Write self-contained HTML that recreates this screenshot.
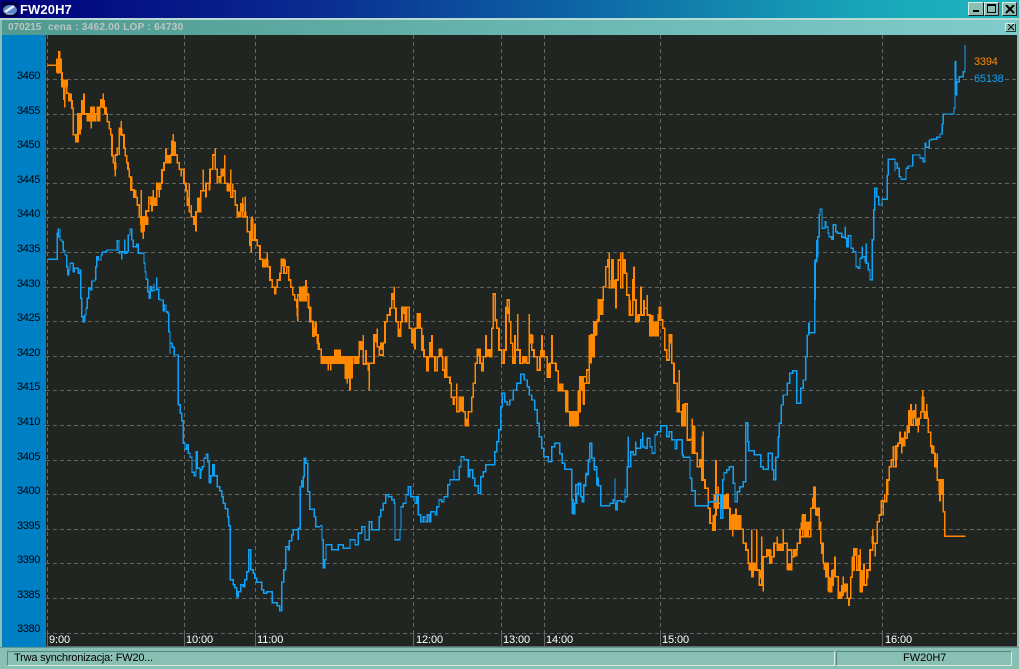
<!DOCTYPE html>
<html><head><meta charset="utf-8"><style>
html,body{margin:0;padding:0;background:#8abfb4}
#w{position:relative;width:1019px;height:669px;overflow:hidden;background:#8abfb4;font-family:"Liberation Sans",sans-serif}
#w div,#w span{position:absolute;white-space:nowrap}
.y{left:17px;font-size:11px;line-height:12px;color:#000;letter-spacing:-.35px}
.t{top:634px;font-size:11px;line-height:12px;color:#fff;letter-spacing:-.1px}
.b{background:#8cbfb4;border:1px solid;border-color:#d8ece6 #202020 #202020 #d8ece6;box-sizing:border-box}
</style></head><body><div id="w">
<div style="left:0;top:0;width:1019px;height:18px;background:linear-gradient(90deg,#00007c 0%,#0a2a90 30%,#0c62a4 55%,#18a6b8 85%,#20b4c0 100%)"></div>
<div style="left:0;top:18px;width:1019px;height:2px;background:#b8dcd4"></div>
<div style="left:2px;top:20px;width:1015px;height:15px;background:linear-gradient(90deg,#4f9b90,#80cccc)"></div>
<svg style="position:absolute;left:2px;top:2px" width="16" height="15" viewBox="0 0 16 15"><rect width="16" height="15" fill="#00003c"/><ellipse cx="8" cy="8" rx="7" ry="5" fill="#5c88c8"/><path d="M3 10L12 4" stroke="#e8f0ff" stroke-width="2.5"/><path d="M4 12H12" stroke="#a8b8d0"/></svg>
<div style="left:20px;top:2px;font-size:13px;line-height:15px;font-weight:bold;color:#fff;letter-spacing:.1px">FW20H7</div>
<div class="b" style="left:968px;top:2px;width:16px;height:14px"></div>
<div style="left:973px;top:10px;width:6px;height:2px;background:#000"></div>
<div class="b" style="left:984px;top:2px;width:15px;height:14px"></div>
<div style="left:987px;top:4px;width:9px;height:9px;border:1px solid #000;border-top-width:2px;box-sizing:border-box"></div>
<div class="b" style="left:1002px;top:2px;width:15px;height:14px"></div>
<svg style="position:absolute;left:1005px;top:5px" width="10" height="9"><path d="M1 0L9 8M9 0L1 8" stroke="#000" stroke-width="2"/></svg>
<div class="b" style="left:1005px;top:23px;width:11px;height:9px;border-color:#d8ece6 #204040 #204040 #d8ece6"></div>
<svg style="position:absolute;left:1007px;top:24px" width="8" height="7"><path d="M1 0L7 6M7 0L1 6" stroke="#000" stroke-width="1"/></svg>
<div style="left:8px;top:22px;font-size:10px;line-height:12px;font-weight:bold;color:#c0c4c0;letter-spacing:0">070215</div>
<div style="left:48px;top:22px;font-size:10px;line-height:12px;font-weight:bold;color:#c0c4c0;letter-spacing:.3px">cena : 3462.00 LOP : 64730</div>
<div style="left:2px;top:35px;width:44px;height:612px;background:#0080c4"></div>
<div style="left:46px;top:35px;width:971px;height:612px;background:#202522"></div>
<svg style="position:absolute;left:0;top:0" width="1019" height="669" shape-rendering="crispEdges">
<g fill="none" stroke="#636663" stroke-width="1" stroke-dasharray="4 3">
<path d="M46 79.5H1017M46 114.5H1017M46 148.5H1017M46 183.5H1017M46 217.5H1017M46 252.5H1017M46 287.5H1017M46 321.5H1017M46 356.5H1017M46 390.5H1017M46 425.5H1017M46 460.5H1017M46 494.5H1017M46 529.5H1017M46 563.5H1017M46 598.5H1017M46 633.5H1017"/>
<path d="M47.5 35V633M184.5 35V633M255.5 35V633M413.5 35V633M501.5 35V633M544.5 35V633M660.5 35V633M882.5 35V633"/>
</g>
<path d="M47.5 633V646M184.5 633V646M255.5 633V646M413.5 633V646M501.5 633V646M544.5 633V646M660.5 633V646M882.5 633V646M46 646.5H1017" stroke="#666" fill="none"/>
<!-- orange -->
<g fill="none" stroke="#ff8800" stroke-width="5">
<path transform="translate(40 40) scale(.3333)" d="M22 76H52V55V98H58V33V98H66V118V140H72V180V140H74V203V140H80V118V160H86V182H96V205H100V284H108V305H114V268V222H120V284V222H126V180V205H132V160V222H142V245V222H154V266V202H162V245V222H172V245V202H182V180H190V160V203H198V222H202V245H208V266H212V284H216V325V347H220V368H226V410V345H232V325H238V345V265H244V243V285H252V325H256V347H260V368H264V388H268V410H272V450H282V472H292V495H298V530H304V450V575H310V597V530H318V555V513H326V472H336V515V495H340V450V495H350V472V430H358V472V430H366V390H372V368H378V325V368H392V345H396V304H400V282V345H406V304V345H412V368H418V388H424V410V388H432V430H438V452H442V495H448V430V515H454V495V530H462V552H468V575V515H474V472V515H482V452H490V388V452H498V472V430H510V388H518V345H526V325V388H532V430V410H544V388H554V345V430H562V452H572V388V472H578V430V452H586V495H592V530H602V492H608V472V530H616V470V530H622V575H630V600H636V530V600H645V550V600"/>
<path transform="translate(40 220) scale(.3333)" d="M622 0V35H630V75H634V97V0H638V60H645V10V60H652V77H660V118H668V140H676V118H682V97V140H690V180H697V202H705V224V202H712V180H720V160H724V118H732V160H740V140H746V180H752V202H758V224H764V240H770V262H773V305V224H780V202V242H790V222V242H798V180V222H805V262H812V304H820V345H826V304V345H835V388H840"/>
<path transform="translate(300 240) scale(.3333)" d="M0 140V182H6V140V182H12V140H18V120V165H26V205H30V245H38V288H42V265H48V245V285H52V310H58V328H64V372V350H85V392V350H92V392V350H104V328V350H112V328V350H120V328V350H136V415H142V430V350H150V452V350H156V415V350H178V306H190V285V372H198V330V370H205V390H208V452V370H215V370H222V285H232V265V320H238V345H250V308H255V245H262V225H270V205H275V162H283V140V205H288V245H295V288H302V245H306V202H316V245H320V202H328V265H335V308H345V328V265H352V222H360V265H365V330H372V350H380V392H385V350H390V308H396V285V350H405V392H412V350H418V328H425V350H428V390H435V412H443V412H450V430H454V472H460V495V472H470V430V515H478V472H490V515H496V557H505V515H510H515V472H520V430H526V392V370H532V328H540V370H545V392H550V350H558V285V330H570V350H575V265H580V162H586V240H590V265H597V330H600H605V370H612V330H618V202H622V180H628V245H632V310H638V370H645V285V330H653V222V330H660V370H668V350H680V370H688V222V285H695V330H702V350H712V390H720V350H726V285V350H735V350H742V412H750V370H756V285V370H768V392H775V452H790V452H798V515H806V515H812V555H820V515H828V555H835V515H840V410H850V492V410H860V430H868V285V350H878V285H885V245H892V240H898V180"/>
<path transform="translate(570 240) scale(.3333)" d="M0 515V557H5V515H12V535V557H20V515H25V450V510H30V410H36V450H42V495V430H50V390H58V350H63V370V285H68V350H72V245H80V287V245H85V225V180H100V140H107V80H113V60H118V37V143H125V60H130V143H138V205V120H145V60H152V37V143H158V37V100H168V100H170V165H178V225H180V180V225H188V120H192V80V180H198V245H205V225H213V140V225H222V180V205H232V165V225H240V287H248V225V287H256V245V287H265V225H270V200V240H278V265H284V330H290V360H298V285H305V370H312V430H318H322V515H328V390V515H336V557H345V492H352V600H360V598H367V535V640H372V557V640H382V680H390V660H395V720H400V575V720H405V745H415V805H420V850H428V870H435V825H438V660V805H445V740V790H455V763V805H470V763H475V805H480V868H488V890V825H498V805V868H510V825V868H520V910H528V930H535V970H545V868V1010H550V970H555V990H560V868V990H568V1035H575V890V1015H580V1055V950H590V930H600V970H605V950H612V910H622V890V930H640V868V910H652V990V930H665V992V950H672V930H682V910H690V868H698V825V890H708V868V890H715V848V890H722V805H732V740V805H740V825H748V868H752V910H760V970H770V990H775V1055"/>
<path transform="translate(800 370) scale(.3333)" d="M0 478V500H8V435H15V500V457H20V500H25V457H32V415H38V385H42V352H45V415H50V435H55V415H58V457H62V520H66V550H70V580H85V622H88V665H95V600V645H100V600H105V560V620H115V645V685H125V645V675H130V620V665H135V643H142V685H147V708V685H152V622H157V560V600H162V537H170V600H176V558H181V537V665H186V600V645H192V580V645H200V600H210V540H218V478V520H226V560V520H232V455H238V435H244V393H250V437V393H254V372V395H260V330H268V290H274V270H280V228V290H288V228H294V220H300V185V205H305V250V205H315V185V205H322V165V187H327V123H333V102V165H340V123H347V102V165H355V187V145H362V125H368V60V125H375V145H380V102V145H385V187H392V228H398V250H405V290H412V250V330H420V395V330H430V425H434V499H497"/>
</g>
<g fill="#ff8800">
<path transform="translate(40 40) scale(.3333)" d="M48 55H66V98H48ZM54 33H62V55H54ZM66 118H84V140H66ZM84 160H96V182H84ZM114 222H126V268H114ZM126 180H135V205H126ZM141 222H160V245H141ZM150 201H160V222H150ZM159 222H168V245H159ZM170 202H182V245H170ZM180 180H195V203H180ZM192 202H200V222H192ZM222 368H230V388H222ZM238 265H248V285H238ZM270 410H278V450H270ZM280 450H290V472H280ZM300 530H325V555H300ZM304 555H315V575H304ZM330 472H350V495H330ZM352 430H365V450H352ZM378 345H392V368H378ZM394 304H406V345H394ZM440 472H445V495H440ZM476 472H482V515H476ZM505 430H512V452H505ZM536 410H545V430H536ZM546 388H556V410H546ZM562 430H572V452H562ZM590 515H602V532H590ZM604 492H612V515H604ZM612 515H620V532H612Z"/>
<path transform="translate(40 220) scale(.3333)" d="M668 118H686V140H668ZM702 202H710V224H702ZM726 118H738V140H726ZM770 262H776V290H770ZM786 222H794V242H786ZM794 200H802V222H794ZM820 325H825V345H820Z"/>
<path transform="translate(300 240) scale(.3333)" d="M63 350H135V372H63ZM103 328H118V350H103ZM136 350H148V415H136ZM160 350H178V372H160ZM178 306H190V330H178ZM222 285H232V308H222ZM240 308H250V330H240ZM275 162H285V180H275ZM295 265H302V288H295ZM306 202H316V222H306ZM333 265H345V308H333ZM352 222H360V265H352ZM365 285H372V330H365ZM378 350H385V392H378ZM417 328H425V350H417ZM433 350H443V412H433ZM478 472H490V515H478ZM458 472H465V495H458ZM495 535H505V557H495ZM532 328H540V350H532ZM555 330H570V350H555ZM618 202H628V222H618ZM638 350H644V370H638ZM668 350H680V370H668ZM690 285H700V310H690ZM720 330H735V350H720ZM742 370H750V412H742ZM775 430H790V452H775ZM798 452H806V515H798ZM812 515H820V535H812ZM868 330H878V350H868ZM882 245H890V285H882ZM895 180H900V222H895Z"/>
<path transform="translate(570 240) scale(.3333)" d="M3 515H12V535H3ZM12 535H22V557H12ZM28 410H40V430H28ZM58 305H68V350H58ZM72 245H80V287H72ZM85 180H100V225H85ZM122 120H140V143H122ZM160 57H168V100H160ZM200 225H210V245H200ZM240 225H248V287H240ZM250 245H265V287H250ZM266 200H275V240H266ZM298 285H305V310H298ZM322 480H328V515H322ZM336 492H345V557H336ZM368 557H376V640H368ZM395 590H402V720H395ZM428 825H435V870H428ZM430 763H443V805H430ZM455 763H472V805H455ZM480 825H498V868H480ZM498 825H515V868H498ZM535 970H558V992H535ZM568 990H578V1015H568ZM590 930H604V950H590ZM622 910H640V930H622ZM652 970H668V992H652ZM670 930H683V950H670ZM695 825H702V868H695ZM712 848H722V868H712ZM736 805H746V825H736ZM760 970H775V990H760ZM775 1010H780V1055H775Z"/>
<path transform="translate(800 370) scale(.3333)" d="M2 457H14V478H2ZM20 457H32V478H20ZM45 415H55V437H45ZM70 580H85V600H70ZM75 600H85V622H75ZM84 622H93V665H84ZM102 580H108V622H102ZM115 665H124V685H115ZM132 643H142V665H132ZM145 685H150V708H145ZM160 537H168V558H160ZM183 620H188V665H183ZM198 600H206V625H198ZM214 498H222V520H214ZM258 330H266V375H258ZM284 228H292V270H284ZM305 205H317V230H305ZM327 123H350V146H327ZM348 145H360V165H348ZM364 80H374V125H364ZM370 125H384V146H370ZM393 228H404V250H393ZM403 270H412V290H403ZM415 330H431V375H415Z"/>
</g>
<!-- blue -->
<g fill="none" stroke="#10a0f4" stroke-width="4.4">
<path transform="translate(40 220) scale(.3333)" d="M22 118H52V40H55V25V50H60V25V60H66V65H70V92H75V105H80V140H83V165H86V150H90V130H100V155H103V145H115V160H120V150H122V235H125V290H130V305H134V285H138V265H142V235H146V215V205H152V210H155V183H165V178H167V140H170V110H175V120H183V105H187V97H195V95H200V90H232V62H237V100H240V95H245V118V95H254V58V100H260V95H265V45H270V28H275V60H280V80H290V73H295V100H312V130H315V155H318V178H323V215H327V235H331V200H335V212H342V190V210H350V172V208H356V238H360V240H370V272H373V255H378V275H383V280H386V335H390V402V370H397V382H403V405H415V555H421V580H425V603H430V670H435V688H440V675H445V700H450V712H456V757H463V768H468V695H472V745H480V775H483V750H487V740H492V715H498V703H503V725H508V788H512V768H518V735H523V767H527V767H532V800H540V812H545V830H550V850H556V866H563V890H566V918H571V1080H580V1095H585V1103H590V1130H595V1115H603V1095H610V1100H615V1080H620V1055H626V990H633V1050H640V1060H645V1075H650V1087H665V1110H672V1120H680V1115H697V1148H712V1158H720V1172H725V1087H731V1050H738V980H745V990H748V962H755V945H760V930H775V960V925H781V800H785V780V800H790V770H793V715H797V730H804V815H810V868H823V890H827V920H840"/>
<path transform="translate(300 240) scale(.3333)" d="M60 858H66V900H70V984H74V960H78V915H95V930H115V915H130V925H150V900H165V915H175V880H185V860H195V900H208V845H215V870H238V830H242V810H250V790H257V765H265V770H275V780H283V790H285V900H300V870H303V800H310V790H318V765H325V740H332V770H345V790H350V770H355V825H362V845H370V830H375V845H382V825H388V845H392V815H405V825H410V800H417V780H425V785H432V770H443V735H450V720H462V690V720H478V680H483V650H492V660H505V710H510V690H518V715H525V738H535V760H542V710H550V695H558V675H570H585V635H590V605H597V570H602V500H607V460H615V485H622V495H630V480H640V450H650V430H662V403H673V420H682V440H688V465H695V480H705V510H712V550H718V590H725V625H732V650H745V665H755V620H765V610H780V642H787V670H795V688H815V780H817V820H823V790H828V735H842V770H848V785H852V735H858V705H865V660H870V612H875V655H883V690H890V735H896"/>
<path transform="translate(570 240) scale(.3333)" d="M0 688H5V780H10V822H15V790H20V762H25V730H32V770H37V785H42V738H48V700H55V665H60V610H65V655H72V680H80V715H85V738H92V798H120V790H130V780H135V715V790H137V810H142V782H155V785H165V745V770H172V680H175V590V680H182V635H190V645H197V605V625H205V625H212V600H218V578V620H225V625H232V595H240V620H246V640H255V585H262V575H272V558H290V590H298V575H305V600H315V627H320V600H337V645H340V652H360V715H365V752H376V798H415V785H440V765H452V785V835H458V720H462V698H470V690H478V680H490V730H495V785H502V755H510V740H520V725H528V548H533V605H537V632H553V645H572V680H580V688H595V640H607V690H612V720H617V652H625V590H628V550H634V495H640V465H652V430H660V400H668V392H680V490H692V445H700V420H707V350H712V285H716V250H718V278H735V65H740V0"/>
<path transform="translate(800 40) scale(.3333)" d="M46 780V660H50V650H53V590H58V525H60V508H66V565H75V545H78V560H84V580H87V590H95V598H100V555H107V575H112V580H125V592H136V560V595H140V620H145V588H153V625H160V635H168V680H175V685H180V655H187V620V650H195V665H199V610V670H205V690H210V720H214H217V600H221V510H224V445H230V470H236V495H246V478H262V405H265V358H285V395V370H292V385H298V410H303V418H318V385H325V378H338V345H360V355H370V365H375V310H378V322H388V300H395V298H410V292H420V282H427V252H430V222H462V205H465V65H467V165H470V125H478V110H490V95H495V15"/>
</g>
</svg>
<span class="y" style="top:70px">3460</span><span class="y" style="top:105px">3455</span><span class="y" style="top:139px">3450</span><span class="y" style="top:174px">3445</span><span class="y" style="top:208px">3440</span><span class="y" style="top:243px">3435</span><span class="y" style="top:278px">3430</span><span class="y" style="top:312px">3425</span><span class="y" style="top:347px">3420</span><span class="y" style="top:381px">3415</span><span class="y" style="top:416px">3410</span><span class="y" style="top:451px">3405</span><span class="y" style="top:485px">3400</span><span class="y" style="top:520px">3395</span><span class="y" style="top:554px">3390</span><span class="y" style="top:589px">3385</span><span class="y" style="top:623px">3380</span>
<span class="t" style="left:49px">9:00</span><span class="t" style="left:186px">10:00</span><span class="t" style="left:257px">11:00</span><span class="t" style="left:416px">12:00</span><span class="t" style="left:503px">13:00</span><span class="t" style="left:546px">14:00</span><span class="t" style="left:662px">15:00</span><span class="t" style="left:885px">16:00</span>
<span style="left:974px;top:56px;font-size:11px;line-height:12px;color:#ff8800;letter-spacing:-.2px">3394</span>
<span style="left:973px;top:73px;font-size:11px;line-height:12px;color:#10a0f4;background:#202522;padding:0 1px;letter-spacing:-.2px">65138</span>
<div style="left:0;top:35px;width:2px;height:612px;background:#8abfb4"></div>
<div style="left:0;top:647px;width:1019px;height:1px;background:#5a9a90"></div>
<div style="left:7px;top:651px;width:828px;height:15px;box-sizing:border-box;border:1px solid;border-color:#4a8a80 #d8ece6 #d8ece6 #4a8a80"></div>
<div style="left:836px;top:651px;width:176px;height:15px;box-sizing:border-box;border:1px solid;border-color:#4a8a80 #d8ece6 #d8ece6 #4a8a80"></div>
<div style="left:14px;top:652px;font-size:11px;line-height:13px;color:#000;letter-spacing:-.2px">Trwa synchronizacja: FW20...</div>
<div style="left:903px;top:652px;font-size:11px;line-height:13px;color:#000">FW20H7</div>
</div></body></html>
